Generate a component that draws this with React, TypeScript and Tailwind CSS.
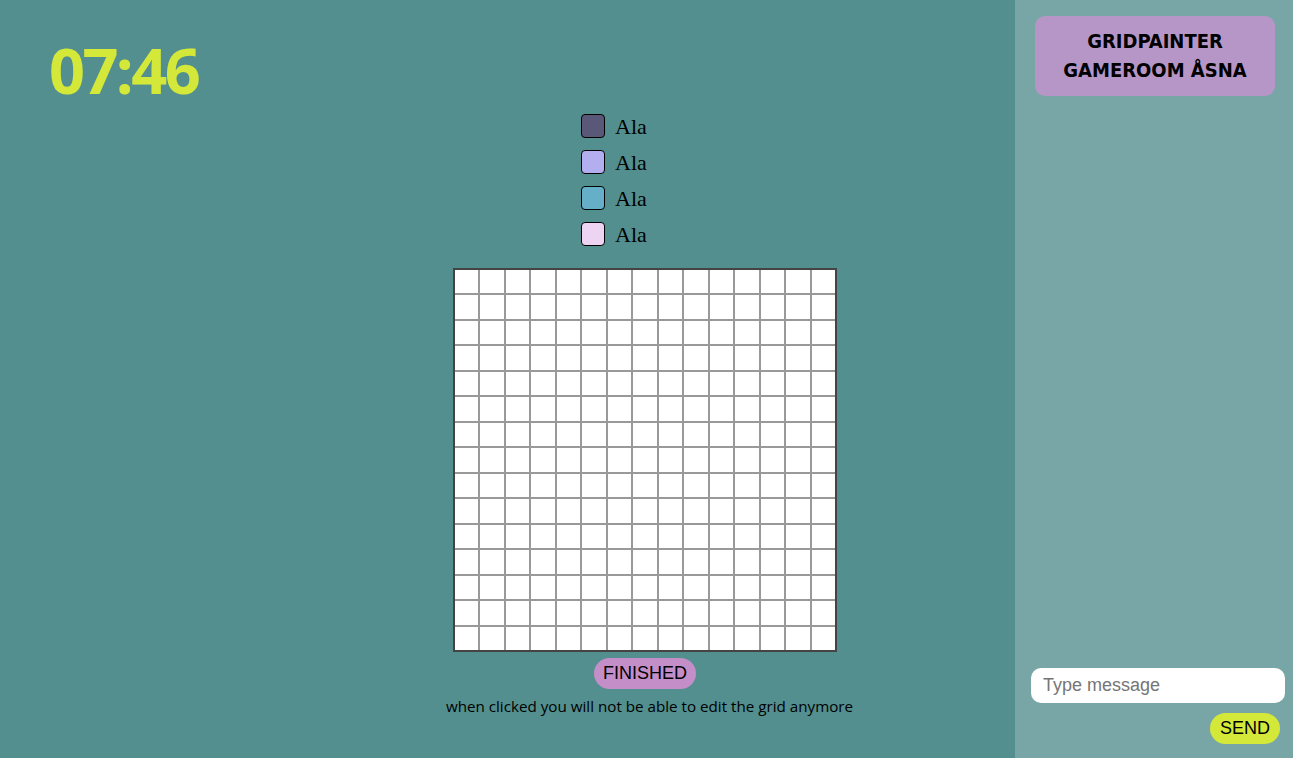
import React from "react";

const players = [
  { name: "Ala", color: "bg-[#5a5878]" },
  { name: "Ala", color: "bg-[#b3aef0]" },
  { name: "Ala", color: "bg-[#66afc9]" },
  { name: "Ala", color: "bg-[#ecd4f2]" },
];

export default function App() {
  const cells = Array.from({ length: 225 }, (_, i) => i);

  return (
    <div className="flex h-[758px] w-full overflow-hidden bg-[#528f8e]">
      {/* GAME AREA */}
      <main className="relative flex-1 flex flex-col">
        <div className="h-[108px] pl-[49px] pt-[38px]">
          <div className="font-['Open_Sans',sans-serif] text-[63px] font-bold leading-none tracking-[-2.6px] text-[#d4e83a]">
            07:46
          </div>
        </div>

        <div className="flex flex-col items-center pl-[275px]">
          {/* PLAYERS */}
          <div className="mr-[62px] flex flex-col">
            {players.map((p, i) => (
              <div key={i} className="flex h-[36px] items-center gap-[10px]">
                <span className={`h-[24px] w-[24px] rounded-[4px] border border-black ${p.color}`} />
                <span className="pt-[1px] font-['Liberation_Serif',serif] text-[22px] text-black">{p.name}</span>
              </div>
            ))}
          </div>

          {/* GRID */}
          <div className="mt-4 grid h-[384px] w-[384px] grid-cols-[repeat(15,1fr)] grid-rows-[repeat(15,1fr)] gap-[2px] border-2 border-[#444] bg-[#999]">
            {cells.map((c) => (
              <div key={c} className="bg-white" />
            ))}
          </div>

          <button className="mt-[6px] h-[31px] rounded-full bg-[#c48fc8] px-[9px] font-['Liberation_Sans',sans-serif] text-[18px] text-black">
            FINISHED
          </button>
          <p className="ml-[9px] mt-[6px] font-['Open_Sans',sans-serif] text-[15.2px] text-black">
            when clicked you will not be able to edit the grid anymore
          </p>
        </div>
      </main>

      {/* CHAT */}
      <aside className="flex w-[278px] flex-col bg-[#78a5a6]">
        <div className="ml-[20px] mt-4 flex h-[80px] w-[240px] flex-col items-center justify-center rounded-[10px] bg-[#b596c6] font-['DejaVu_Sans_Condensed','DejaVu_Sans',sans-serif] text-[20px] font-bold uppercase leading-[29px] text-black">
          <span>Gridpainter</span>
          <span>Gameroom Åsna</span>
        </div>

        <div className="mt-auto flex flex-col items-end pb-[14px] pl-[16px] pr-[8px]">
          <input
            placeholder="Type message"
            className="h-[35px] w-full rounded-[10px] bg-white px-[12px] font-['Liberation_Sans',sans-serif] text-[18px] text-black outline-none placeholder:text-[#757575]"
          />
          <button className="mr-[5px] mt-[10px] h-[31px] rounded-full bg-[#d4e83a] px-[10px] font-['Liberation_Sans',sans-serif] text-[18px] text-black">
            SEND
          </button>
        </div>
      </aside>
    </div>
  );
}
